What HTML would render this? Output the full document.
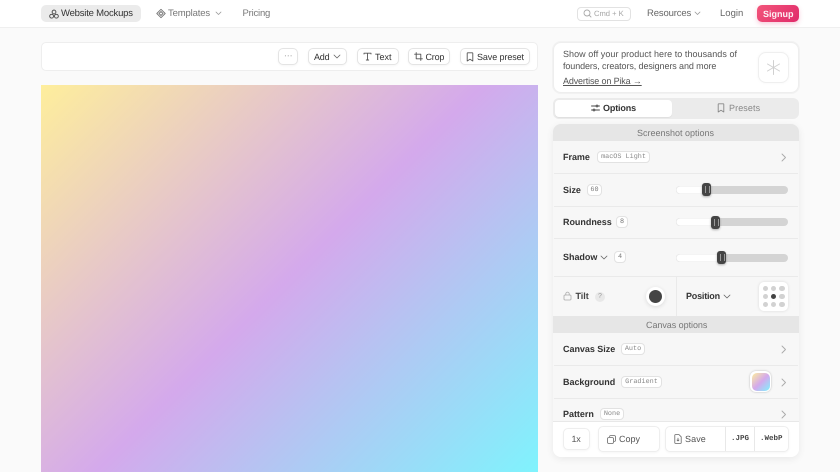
<!DOCTYPE html>
<html><head><meta charset="utf-8">
<style>
*{box-sizing:border-box;margin:0;padding:0}
html,body{width:840px;height:472px;overflow:hidden;background:#fafafa;font-family:"Liberation Sans",sans-serif;color:#2b2b2b;text-rendering:geometricPrecision}
.a{position:absolute}
.t{position:absolute;white-space:nowrap;font-size:9.5px;line-height:14px}
.b{position:absolute;background:#fff;border:1px solid #e4e4e4;border-radius:5px;box-shadow:0 1px 2px rgba(0,0,0,.04)}
svg{position:absolute;fill:none;stroke-linecap:round;stroke-linejoin:round}
.l{font-weight:bold;color:#333;font-size:9px;letter-spacing:-.03px}
.tag{position:absolute;height:12px;background:#fff;border:1px solid #e2e2e2;border-radius:4px;font:6.8px/10px "Liberation Mono",monospace;color:#777;text-align:center;white-space:nowrap}
.sep{position:absolute;left:554px;width:244px;height:1px;background:#eaeaea}
.tr{position:absolute;left:676px;width:112px;height:8px;background:#d4d4d4;border-radius:4px}
.fi{position:absolute;left:676px;height:8px;background:#fff;border-radius:4px 0 0 4px;box-shadow:inset 0 0 1px #bbb}
.th{position:absolute;width:9px;height:13px;background:#444;border-radius:3px;box-shadow:0 1px 2px rgba(0,0,0,.3)}
.th:after{content:"";position:absolute;left:3px;top:3px;width:3px;height:7px;border-left:1px solid #999;border-right:1px solid #999}
.d{position:absolute;width:5.5px;height:5.5px;border-radius:50%;background:#d2d2d2}
</style></head><body>

<!-- header -->
<div class="a" style="left:0;top:0;width:840px;height:28px;background:#fff;border-bottom:1px solid #efefef"></div>
<div class="a" style="left:41px;top:5px;width:100px;height:17px;background:#ebebeb;border-radius:5px"></div>
<svg style="left:49px;top:8.5px" width="10" height="10" viewBox="0 0 10 10" stroke="#444" stroke-width=".9"><circle cx="5" cy="3" r="1.9"/><circle cx="2.6" cy="7.2" r="1.9"/><circle cx="7.4" cy="7.2" r="1.9"/></svg>
<div class="t" style="left:61px;top:6.5px;color:#333;letter-spacing:-.2px">Website Mockups</div>
<svg style="left:156px;top:8px" width="10" height="11" viewBox="0 0 10 10" stroke="#777" stroke-width=".9"><path d="M5 .8 9.2 5 5 9.2.8 5Z"/><path d="M5 3 7 5 5 7 3 5Z"/></svg>
<div class="t" style="left:168px;top:6.5px;color:#777;letter-spacing:-.15px">Templates</div>
<svg style="left:214.5px;top:11px" width="7" height="5" viewBox="0 0 7 5" stroke="#999" stroke-width=".8"><path d="M1 1 3.5 3.5 6 1"/></svg>
<div class="t" style="left:242.5px;top:6.5px;color:#777;letter-spacing:-.2px">Pricing</div>

<div class="a" style="left:577px;top:7px;width:54px;height:14px;border:1px solid #e2e2e2;border-radius:4px;background:#fff"></div>
<svg style="left:583px;top:9px" width="9" height="9" viewBox="0 0 9 9" stroke="#aaa" stroke-width=".9"><circle cx="4" cy="4" r="3"/><path d="M6.3 6.3 8 8"/></svg>
<div class="t" style="left:594px;top:7px;color:#a5a5a5;font-size:7.6px">Cmd + K</div>
<div class="t" style="left:647px;top:6.5px;color:#666;letter-spacing:-.15px">Resources</div>
<svg style="left:694px;top:11px" width="7" height="5" viewBox="0 0 7 5" stroke="#999" stroke-width=".8"><path d="M1 1 3.5 3.5 6 1"/></svg>
<div class="t" style="left:720px;top:6.5px;color:#666">Login</div>
<div class="a" style="left:757px;top:5px;width:42px;height:17px;border-radius:5px;background:linear-gradient(135deg,#f2557a,#e02a6a);box-shadow:0 2px 5px rgba(225,50,110,.25)"></div>
<div class="t" style="left:763px;top:6.5px;color:#fff;font-weight:bold;font-size:9px;opacity:.92">Signup</div>

<!-- toolbar -->
<div class="a" style="left:41px;top:42px;width:497px;height:29px;background:#fff;border:1px solid #eee;border-radius:5px"></div>
<div class="b" style="left:278px;top:48px;width:20px;height:17px"></div>
<div class="t" style="left:284px;top:53px;color:#777;font-size:8px;line-height:6px;letter-spacing:.2px">···</div>
<div class="b" style="left:308px;top:48px;width:39px;height:17px"></div>
<div class="t" style="left:314px;top:50px;color:#333;font-size:9px;letter-spacing:-.2px">Add</div>
<svg style="left:333px;top:54px" width="8" height="5" viewBox="0 0 8 5" stroke="#666" stroke-width=".8"><path d="M1 1 4 4 7 1"/></svg>
<div class="b" style="left:357px;top:48px;width:42px;height:17px"></div>
<svg style="left:363px;top:52px" width="9" height="9" viewBox="0 0 9 9" stroke="#555" stroke-width=".9"><path d="M1 2V1.2H8V2M4.5 1.2V8M3.3 8H5.7"/></svg>
<div class="t" style="left:375px;top:50px;color:#333;font-size:9px">Text</div>
<div class="b" style="left:408px;top:48px;width:42px;height:17px"></div>
<svg style="left:414px;top:52px" width="9" height="9" viewBox="0 0 9 9" stroke="#555" stroke-width=".9"><path d="M2.2.6V6.8H8.4M.6 2.2H6.8V8.4"/></svg>
<div class="t" style="left:425.5px;top:50px;color:#333;font-size:9px;letter-spacing:-.2px">Crop</div>
<div class="b" style="left:460px;top:48px;width:70px;height:17px"></div>
<svg style="left:466px;top:52px" width="8" height="10" viewBox="0 0 8 10" stroke="#555" stroke-width=".9"><path d="M1.2 1.2Q1.2.8 1.6.8H6.4Q6.8.8 6.8 1.2V9L4 7.2 1.2 9Z"/></svg>
<div class="t" style="left:477px;top:50px;color:#333;font-size:9px;letter-spacing:-.1px">Save preset</div>

<!-- canvas -->
<div class="a" style="left:41px;top:85px;width:497px;height:387px;background:linear-gradient(135deg,#feee9c 0%,#d4a9ec 50%,#7ff3fd 100%)"></div>

<!-- ad -->
<div class="a" style="left:553px;top:42px;width:246px;height:51px;background:#fff;border:1px solid #eee;border-radius:8px;box-shadow:0 0 0 1px #f2f2f2"></div>
<div class="t" style="left:563px;top:47px;color:#555;font-size:9px;letter-spacing:.05px">Show off your product here to thousands of</div>
<div class="t" style="left:563px;top:59px;color:#555;font-size:9px;letter-spacing:-.1px">founders, creators, designers and more</div>
<div class="t" style="left:563px;top:74px;color:#555;font-size:9px;letter-spacing:-.15px;text-decoration:underline">Advertise on Pika →</div>
<div class="a" style="left:758px;top:52px;width:31px;height:31px;border:1px solid #efefef;border-radius:8px;background:#fff;box-shadow:0 0 3px rgba(0,0,0,.04)"></div>
<svg style="left:766px;top:60px" width="15" height="15" viewBox="0 0 15 15" stroke="#d0d0d0" stroke-width="1"><path d="M7.5 .5V14.5M1.5 4 13.5 11M13.5 4 1.5 11"/></svg>

<!-- tabs -->
<div class="a" style="left:553px;top:98px;width:246px;height:21px;background:#ebebeb;border-radius:6px"></div>
<div class="a" style="left:555px;top:100px;width:117px;height:17px;background:#fff;border-radius:4px;box-shadow:0 1px 1px rgba(0,0,0,.05)"></div>
<svg style="left:591px;top:104px" width="9" height="8" viewBox="0 0 9 8" stroke="#444" stroke-width=".9"><path d="M.5 2H8.5M.5 6H8.5"/><circle cx="6" cy="2" r=".9" fill="#fff"/><circle cx="3" cy="6" r=".9" fill="#fff"/></svg>
<div class="t" style="left:603px;top:101px;font-weight:bold;color:#333;font-size:9px;letter-spacing:-.15px">Options</div>
<svg style="left:717px;top:103px" width="8" height="10" viewBox="0 0 8 10" stroke="#888" stroke-width=".9"><path d="M1.2 1.2Q1.2.8 1.6.8H6.4Q6.8.8 6.8 1.2V9L4 7.2 1.2 9Z"/></svg>
<div class="t" style="left:729px;top:101px;color:#888;font-size:9px;letter-spacing:.1px">Presets</div>

<!-- options panel -->
<div class="a" style="left:553px;top:124px;width:246px;height:333px;background:#f7f7f7;border-radius:8px;box-shadow:0 2px 8px rgba(0,0,0,.07);overflow:hidden"></div>
<div class="a" style="left:553px;top:124px;width:246px;height:17px;background:#e6e6e6;border-radius:8px 8px 0 0"></div>
<div class="t" style="left:637px;top:126px;color:#777;font-size:9px">Screenshot options</div>

<div class="t l" style="left:563px;top:150px">Frame</div>
<div class="tag" style="left:597px;top:151px;width:53px;color:#888">macOS Light</div>
<svg style="left:781px;top:153px" width="6" height="9" viewBox="0 0 6 9" stroke="#aaa" stroke-width=".9"><path d="M1 1 4.5 4.5 1 8"/></svg>
<div class="sep" style="top:173px"></div>

<div class="t l" style="left:563px;top:183px">Size</div>
<div class="tag" style="left:587px;top:184px;width:15px">60</div>
<div class="tr" style="top:186px"></div><div class="fi" style="top:186px;width:28px"></div><div class="th" style="left:702px;top:183px"></div>
<div class="sep" style="top:206px"></div>

<div class="t l" style="left:563px;top:215px">Roundness</div>
<div class="tag" style="left:616px;top:216px;width:12px">8</div>
<div class="tr" style="top:218px"></div><div class="fi" style="top:218px;width:36px"></div><div class="th" style="left:711px;top:215.5px"></div>
<div class="sep" style="top:238px"></div>

<div class="t l" style="left:563px;top:250px">Shadow</div>
<svg style="left:600px;top:255px" width="8" height="5" viewBox="0 0 8 5" stroke="#666" stroke-width=".8"><path d="M1 1 4 4 7 1"/></svg>
<div class="tag" style="left:614px;top:251px;width:12px">4</div>
<div class="tr" style="top:253.5px"></div><div class="fi" style="top:253.5px;width:42px"></div><div class="th" style="left:717px;top:251px"></div>
<div class="sep" style="top:276px"></div>

<svg style="left:563px;top:291px" width="9" height="10" viewBox="0 0 9 10" stroke="#aaa" stroke-width=".8"><rect x="1" y="4" width="7" height="5" rx="1"/><path d="M2.8 4V2.8A1.7 1.7 0 0 1 6.2 2.8V4"/></svg>
<div class="t l" style="left:575.5px;top:289px;color:#444">Tilt</div>
<div class="a" style="left:595px;top:291.5px;width:10px;height:10px;border-radius:50%;background:#e8e8e8;color:#999;font-size:7px;line-height:10px;text-align:center">?</div>
<div class="a" style="left:645.5px;top:286.5px;width:19px;height:19px;border-radius:50%;background:#fff;box-shadow:0 1px 4px rgba(0,0,0,.12)"></div>
<div class="a" style="left:648.5px;top:289.5px;width:13px;height:13px;border-radius:50%;background:#444"></div>
<div class="a" style="left:676px;top:277px;width:1px;height:39px;background:#eaeaea"></div>
<div class="t l" style="left:686px;top:289px;letter-spacing:-.2px">Position</div>
<svg style="left:723px;top:294px" width="8" height="5" viewBox="0 0 8 5" stroke="#666" stroke-width=".8"><path d="M1 1 4 4 7 1"/></svg>
<div class="a" style="left:759px;top:282px;width:29px;height:29px;background:#fff;border-radius:5px;box-shadow:0 0 3px rgba(0,0,0,.12)"></div>
<div class="d" style="left:762.5px;top:285.5px"></div><div class="d" style="left:770.5px;top:285.5px"></div><div class="d" style="left:779px;top:285.5px"></div>
<div class="d" style="left:762.5px;top:293.5px"></div><div class="d" style="left:770.5px;top:293.5px;background:#444"></div><div class="d" style="left:779px;top:293.5px"></div>
<div class="d" style="left:762.5px;top:301.5px"></div><div class="d" style="left:770.5px;top:301.5px"></div><div class="d" style="left:779px;top:301.5px"></div>

<div class="a" style="left:553px;top:316px;width:246px;height:17px;background:#e6e6e6"></div>
<div class="t" style="left:646px;top:318px;color:#777;font-size:9px;letter-spacing:-.05px">Canvas options</div>

<div class="t l" style="left:563px;top:342px">Canvas Size</div>
<div class="tag" style="left:621px;top:343px;width:24px;color:#888">Auto</div>
<svg style="left:781px;top:345px" width="6" height="9" viewBox="0 0 6 9" stroke="#aaa" stroke-width=".9"><path d="M1 1 4.5 4.5 1 8"/></svg>
<div class="sep" style="top:365px"></div>

<div class="t l" style="left:563px;top:374.5px">Background</div>
<div class="tag" style="left:621px;top:375.5px;width:41px;color:#888">Gradient</div>
<div class="a" style="left:750px;top:371px;width:21px;height:21px;border-radius:6px;background:#fff;box-shadow:0 0 2px rgba(0,0,0,.25)"></div>
<div class="a" style="left:751.5px;top:372.5px;width:18px;height:18px;border-radius:5px;background:linear-gradient(135deg,#feee9c 0%,#d4a9ec 50%,#7ff3fd 100%)"></div>
<svg style="left:781px;top:377.5px" width="6" height="9" viewBox="0 0 6 9" stroke="#aaa" stroke-width=".9"><path d="M1 1 4.5 4.5 1 8"/></svg>
<div class="sep" style="top:398px"></div>

<div class="t l" style="left:563px;top:407px">Pattern</div>
<div class="tag" style="left:600px;top:408px;width:24px;color:#888">None</div>
<svg style="left:781px;top:410px" width="6" height="9" viewBox="0 0 6 9" stroke="#aaa" stroke-width=".9"><path d="M1 1 4.5 4.5 1 8"/></svg>

<!-- footer -->
<div class="a" style="left:553px;top:421px;width:246px;height:36px;background:#fff;border-top:1px solid #e8e8e8;border-radius:0 0 8px 8px"></div>
<div class="b" style="left:563px;top:428px;width:27px;height:22px;border-color:#eee"></div>
<div class="t" style="left:571.5px;top:432px;color:#555;font-size:9px;letter-spacing:-.3px">1x</div>
<div class="b" style="left:598px;top:426px;width:62px;height:26px;border-color:#eee"></div>
<svg style="left:607px;top:434.5px" width="9" height="9" viewBox="0 0 9 9" stroke="#666" stroke-width=".8"><rect x=".6" y="2.6" width="5.8" height="5.8" rx="1"/><path d="M2.6 1.6Q2.6.6 3.6.6H7.4Q8.4.6 8.4 1.6V5.4Q8.4 6.4 7.4 6.4"/></svg>
<div class="t" style="left:619px;top:432px;color:#555;font-size:9px">Copy</div>
<div class="b" style="left:665px;top:426px;width:124px;height:26px;border-color:#eee"></div>
<div class="a" style="left:725px;top:427px;width:1px;height:24px;background:#e8e8e8"></div>
<div class="a" style="left:754px;top:427px;width:1px;height:24px;background:#e8e8e8"></div>
<svg style="left:674px;top:434px" width="8" height="10" viewBox="0 0 8 10" stroke="#666" stroke-width=".8"><path d="M.8 1.2Q.8.6 1.4.6H5L7.2 2.8V8.8Q7.2 9.4 6.6 9.4H1.4Q.8 9.4.8 8.8Z"/><path d="M4 4.2V7M3 6 4 7 5 6"/></svg>
<div class="t" style="left:685px;top:432px;color:#555;font-size:9px;letter-spacing:.1px">Save</div>
<div class="t" style="left:731px;top:432px;color:#444;font:bold 7.5px/14px 'Liberation Mono',monospace">.JPG</div>
<div class="t" style="left:760px;top:432px;color:#444;font:bold 7.5px/14px 'Liberation Mono',monospace">.WebP</div>

</body></html>
